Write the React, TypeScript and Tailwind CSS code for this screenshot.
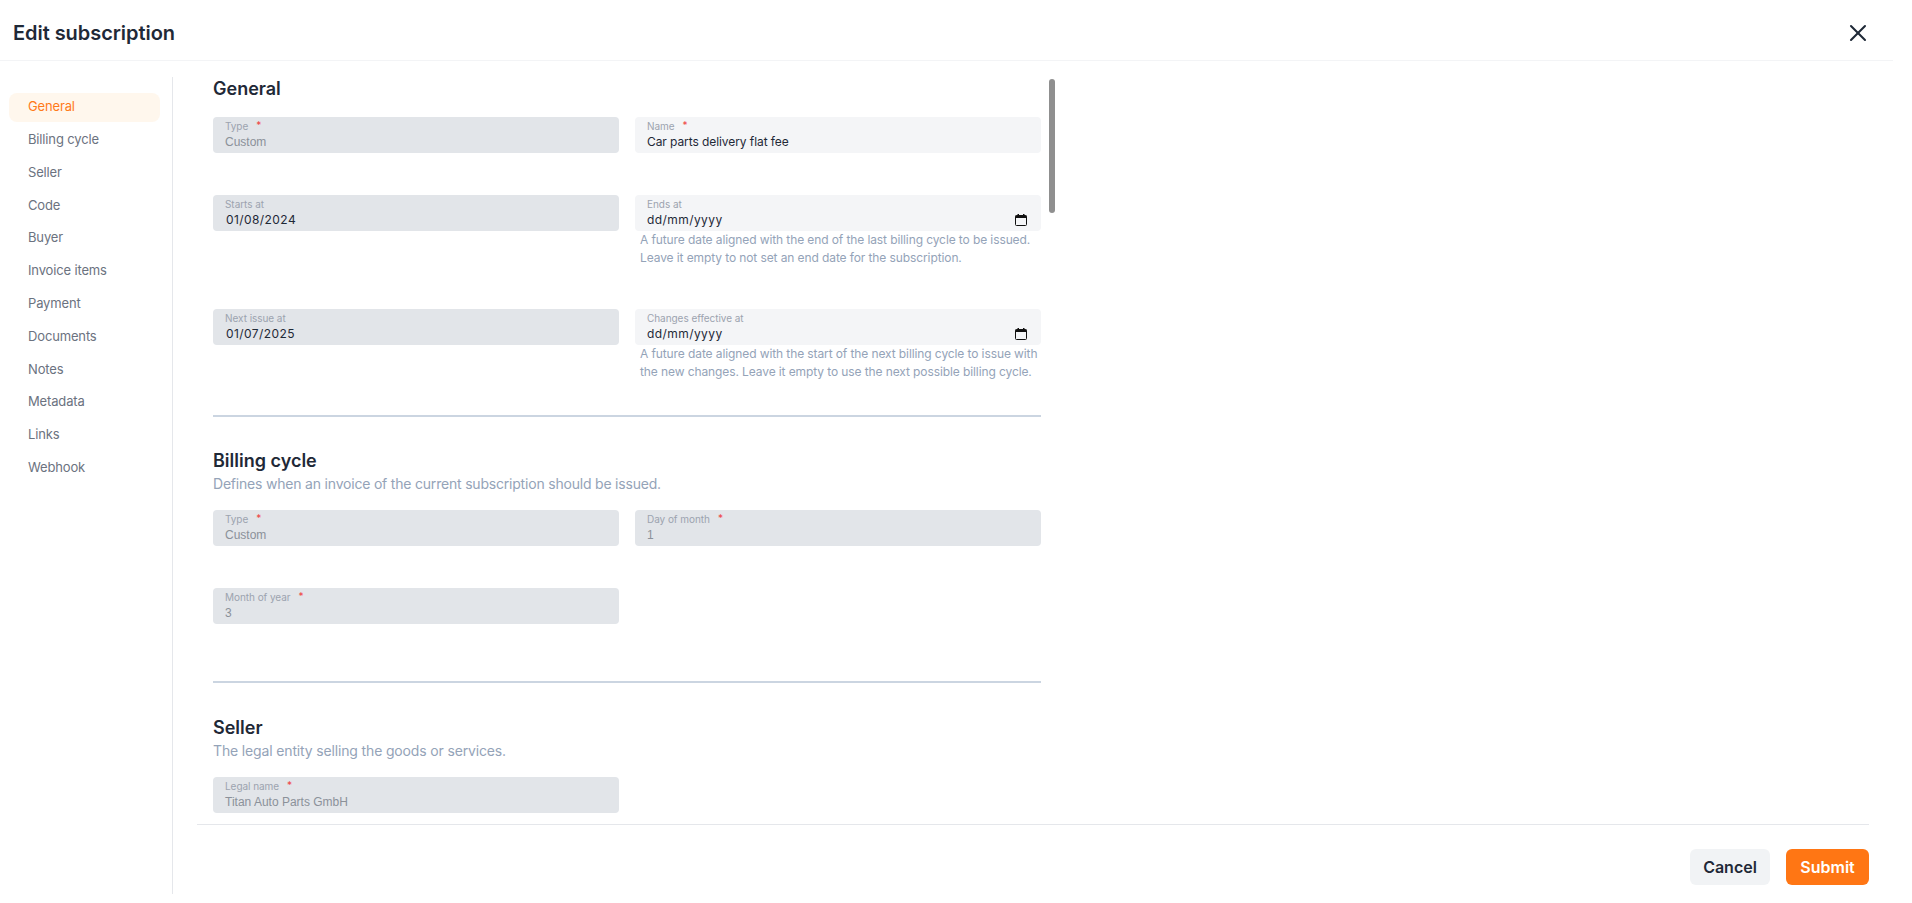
import React from "react";
import { X } from "lucide-react";

const navItems = ["General","Billing cycle","Seller","Code","Buyer","Invoice items","Payment","Documents","Notes","Metadata","Links","Webhook"];

function Cal() {
  return (
    <svg width="12" height="12" viewBox="0 0 12 12" className="shrink-0">
      <path d="M1.5 1.5h9a1 1 0 0 1 1 1v8a1 1 0 0 1-1 1h-9a1 1 0 0 1-1-1v-8a1 1 0 0 1 1-1z" fill="none" stroke="#111" strokeWidth="1" />
      <rect x="0.5" y="1.5" width="11" height="2.5" fill="#111" />
      <rect x="2.5" y="0" width="1.5" height="2" fill="#111" />
      <rect x="8" y="0" width="1.5" height="2" fill="#111" />
    </svg>
  );
}

function Field({ label, value, required, disabled, date, arial, help }: { label: string; value: string; required?: boolean; disabled?: boolean; date?: boolean; arial?: boolean; help?: string[] }) {
  return (
    <div>
      <div className={`h-9 rounded-[4px] pl-3 pr-[14px] pt-[3px] ${disabled ? "bg-[#e2e5e9]" : "bg-[#f4f5f7]"}`}>
        <div className="flex h-[12px] items-center text-[10px] leading-3 tracking-[-0.05px] text-[#9ca3af]">
          <span>{label}</span>
          {required && <span className="ml-[8px] -translate-y-[1px] text-[#ef4444]">*</span>}
        </div>
        <div className="mt-[1px] flex h-[18px] items-center justify-between">
          <span className={`text-[12px] leading-[18px] ${arial ? "font-['Liberation_Sans',sans-serif] text-[#8b9199]" : date ? `${disabled ? "pl-[1px]" : ""} tracking-[0.42px] text-[#1f2937]` : "tracking-[-0.08px] text-[#1f2937]"}`}>{value}</span>
          {date && !disabled && <Cal />}
        </div>
      </div>
      {help && (
        <div className="whitespace-nowrap pl-[5px] text-[12px] leading-[18px] tracking-[-0.1px] text-[#94a3b8]">
          {help.map((h) => <div key={h}>{h}</div>)}
        </div>
      )}
    </div>
  );
}

function Divider() {
  return <div className="h-[2px] bg-[#cbd5e1]" />;
}

export default function App() {
  return (
    <div className="h-[903px] w-[1912px] overflow-hidden bg-white font-['Inter',sans-serif]">
      <div className="flex h-[903px] w-[1893px] flex-col">
        <header className="flex h-[61px] shrink-0 items-center justify-between border-b border-[#f3f4f6] pl-[13px] pr-[21px] pt-[6px]">
          <h1 className="text-[20px] font-semibold tracking-[-0.05px] text-[#1f2937]">Edit subscription</h1>
          <X size={28} strokeWidth={1.75} className="text-[#1f2937]" />
        </header>
        <div className="flex min-h-0 flex-1 pt-[16px] pb-[9px]">
          <nav className="flex w-[173px] shrink-0 flex-col gap-[4px] border-r border-[#e5e7eb] pl-[9px] pr-[12px] pt-[16px]">
            {navItems.map((n, i) => (
              <div key={n} className={`flex h-[28.8px] items-center rounded-lg pb-[1px] pl-[19px] text-[13px] tracking-[-0.15px] ${i === 0 ? "bg-[#fff7ed] text-[#ff7a1a]" : "text-[#6b7280]"}`}>{n}</div>
            ))}
          </nav>
          <div className="flex min-w-0 flex-1 flex-col pl-[24px] pr-[24px]">
            <div className="relative min-h-0 flex-1 overflow-hidden pl-[16px]">
              <div className="w-[828px]">
                <h2 className="text-[18px] font-semibold leading-[24px] text-[#1f2937]">General</h2>
                <div className="mt-[16px] grid grid-cols-2 gap-x-4">
                  <Field label="Type" value="Custom" required disabled arial />
                  <Field label="Name" value="Car parts delivery flat fee" required />
                </div>
                <div className="mt-[42px] grid grid-cols-2 gap-x-4">
                  <Field label="Starts at" value="01/08/2024" disabled date />
                  <Field label="Ends at" value="dd/mm/yyyy" date help={["A future date aligned with the end of the last billing cycle to be issued.", "Leave it empty to not set an end date for the subscription."]} />
                </div>
                <div className="mt-[42px] grid grid-cols-2 gap-x-4">
                  <Field label="Next issue at" value="01/07/2025" disabled date />
                  <Field label="Changes effective at" value="dd/mm/yyyy" date help={["A future date aligned with the start of the next billing cycle to issue with", "the new changes. Leave it empty to use the next possible billing cycle."]} />
                </div>
                <div className="mt-[34px]"><Divider /></div>
                <h2 className="mt-[32px] text-[18px] font-semibold leading-[24px] text-[#1f2937]">Billing cycle</h2>
                <p className="text-[14px] leading-[21px] tracking-[-0.2px] text-[#94a3b8]">Defines when an invoice of the current subscription should be issued.</p>
                <div className="mt-[16px] grid grid-cols-2 gap-x-4">
                  <Field label="Type" value="Custom" required disabled arial />
                  <Field label="Day of month" value="1" required disabled arial />
                </div>
                <div className="mt-[42px] grid grid-cols-2 gap-x-4">
                  <Field label="Month of year" value="3" required disabled arial />
                </div>
                <div className="mt-[57px]"><Divider /></div>
                <h2 className="mt-[33px] text-[18px] font-semibold leading-[24px] text-[#1f2937]">Seller</h2>
                <p className="text-[14px] leading-[21px] tracking-[-0.15px] text-[#94a3b8]">The legal entity selling the goods or services.</p>
                <div className="mt-[16px] grid grid-cols-2 gap-x-4">
                  <Field label="Legal name" value="Titan Auto Parts GmbH" required disabled arial />
                </div>
              </div>
              <div className="absolute left-[852px] top-[2px] h-[134px] w-[6px] rounded-full bg-[#8f8f8f]" />
            </div>
            <footer className="flex h-[70px] shrink-0 items-start justify-end gap-4 border-t border-[#e5e7eb] pt-[24px]">
              <button className="h-9 w-[80px] rounded-[6px] bg-[#f1f3f5] text-[16px] font-semibold text-[#1f2937]">Cancel</button>
              <button className="h-9 w-[83px] rounded-[6px] bg-[#ff7614] text-[16px] font-semibold text-white">Submit</button>
            </footer>
          </div>
        </div>
      </div>
    </div>
  );
}
